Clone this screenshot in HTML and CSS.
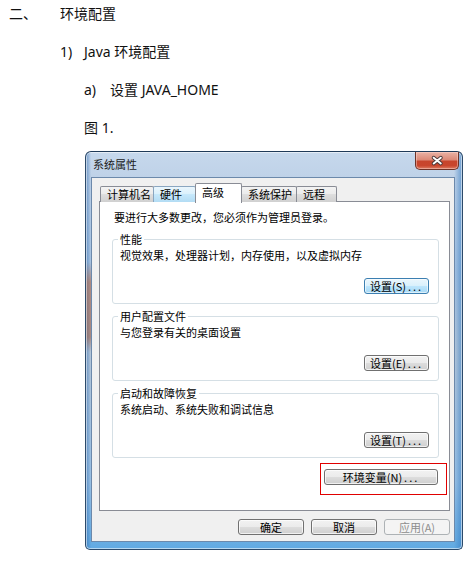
FILE: index.html
```html
<!DOCTYPE html>
<html lang="zh-CN">
<head>
<meta charset="utf-8">
<title>环境配置</title>
<link rel="stylesheet" href="styles.css">
</head>
<body>
<div class="doc">
  <p class="line l1"><span class="num n1">二、</span><span>环境配置</span></p>
  <p class="line l2"><span class="num n2">1)</span><span>Java 环境配置</span></p>
  <p class="line l3"><span class="num n3">a)</span><span>设置 JAVA_HOME</span></p>
  <p class="line l4">图 1.</p>

  <div class="window">
    <div class="titlebar">
      <span class="title">系统属性</span>
      <span class="close">
        <svg width="44" height="18" viewBox="0 0 44 18">
          <path d="M18.5 5.5 L26 11.5 M26 5.5 L18.5 11.5" stroke="#4a3a3a" stroke-width="4" stroke-linecap="round" fill="none"/>
          <path d="M18.5 5.5 L26 11.5 M26 5.5 L18.5 11.5" stroke="#ffffff" stroke-width="2" stroke-linecap="round" fill="none"/>
        </svg>
      </span>
    </div>
    <div class="client">
      <div class="tabs">
        <span class="tab t1">计算机名</span>
        <span class="tab t2 hover">硬件</span>
        <span class="tab t3 active">高级</span>
        <span class="tab t4">系统保护</span>
        <span class="tab t5">远程</span>
      </div>
      <div class="panel">
        <p class="intro">要进行大多数更改，您必须作为管理员登录。</p>
        <fieldset class="group">
          <legend>性能</legend>
          <p class="gtext">视觉效果，处理器计划，内存使用，以及虚拟内存</p>
          <div class="grow"><span class="btn small focus">设置(<u>S</u>)<span class="dots">...</span></span></div>
        </fieldset>
        <fieldset class="group">
          <legend>用户配置文件</legend>
          <p class="gtext">与您登录有关的桌面设置</p>
          <div class="grow"><span class="btn small">设置(<u>E</u>)<span class="dots">...</span></span></div>
        </fieldset>
        <fieldset class="group">
          <legend>启动和故障恢复</legend>
          <p class="gtext">系统启动、系统失败和调试信息</p>
          <div class="grow"><span class="btn small">设置(<u>T</u>)<span class="dots">...</span></span></div>
        </fieldset>
        <div class="envrow">
          <div class="mark"><span class="btn env">环境变量(<u>N</u>)<span class="dots">...</span></span></div>
        </div>
      </div>
      <div class="actions">
        <span class="btn act">确定</span>
        <span class="btn act">取消</span>
        <span class="btn act disabled">应用(<u>A</u>)</span>
      </div>
    </div>
  </div>
</div>
</body>
</html>
```

FILE: styles.css
```css
html, body {
  margin: 0;
  padding: 0;
  background: #ffffff;
}

.doc {
  width: 474px;
  padding-top: 4px;
  font-family: "Noto Sans", "Noto Sans CJK SC", sans-serif;
  font-size: 14px;
  color: #111;
}

.line {
  margin: 0 0 18px 0;
  line-height: 20px;
  height: 20px;
  display: flex;
  white-space: nowrap;
}

.l1 { padding-left: 9px; }
.l2 { padding-left: 60px; }
.l3 { padding-left: 84px; }
.l4 { padding-left: 84px; margin-bottom: 0; }

.num { display: inline-block; }
.n1 { width: 51px; }
.n2 { width: 24px; }
.n3 { width: 26px; }

/* ---------- window ---------- */
.window {
  margin: 13px 0 0 85px;
  width: 378px;
  height: 399px;
  box-sizing: border-box;
  border: 1px solid #2c4a6a;
  border-top-color: #1f3a58;
  border-radius: 6px 6px 5px 5px;
  padding: 0 7px 7px 5px;
  display: flex;
  flex-direction: column;
  background:
    linear-gradient(180deg, rgba(0,0,0,0) 0, rgba(0,0,0,0) 110px, rgba(180,95,55,0.55) 130px, rgba(160,80,45,0.5) 185px, rgba(0,0,0,0) 200px) left top / 5px 100% no-repeat,
    linear-gradient(90deg, rgba(40,100,170,0.55) 0, rgba(40,100,170,0) 5px, rgba(0,0,0,0) 368px, rgba(50,120,190,0.6) 376px),
    linear-gradient(180deg, #c6d8ec 0, #bfd2e8 25px, #a9c5e3 120px, #b9c9da 200px, #9cc3e6 330px, #5fa9e2 399px);
  box-shadow: inset 0 0 0 1px rgba(255,255,255,0.55);
  font-family: "Noto Sans CJK SC", "Noto Sans", sans-serif;
  font-size: 11px;
  color: #000;
}

.titlebar {
  height: 25px;
  flex: none;
  display: flex;
  justify-content: space-between;
  align-items: flex-start;
  padding-left: 2px;
  margin-right: -4px;
}

.title {
  line-height: 14px;
  margin-top: 5px;
  color: #1b1b1b;
  font-size: 11px;
}

.close {
  width: 44px;
  height: 18px;
  box-sizing: border-box;
  border: 1px solid #6d3328;
  border-top: none;
  border-radius: 0 0 5px 5px;
  background: linear-gradient(180deg, #e9b2a5 0, #dc8a78 45%, #c7452c 55%, #c9462d 80%, #dc7d63 100%);
  box-shadow: inset 0 0 0 1px rgba(255,220,210,0.45);
  display: flex;
}

.close svg { display: block; }

.client {
  flex: 1;
  box-sizing: border-box;
  border: 1px solid #6c89ab;
  background: #f0f0f0;
  padding: 5px 4px 6px 7px;
  display: flex;
  flex-direction: column;
}

/* ---------- tabs ---------- */
.tabs {
  height: 19px;
  flex: none;
  display: flex;
  align-items: flex-end;
  padding-left: 1px;
  margin-bottom: -1px;
  position: relative;
  z-index: 1;
}

.tab {
  box-sizing: border-box;
  height: 16px;
  border: 1px solid #898c95;
  border-bottom: none;
  border-radius: 2px 2px 0 0;
  margin-right: -1px;
  padding: 0 0 0 6px;
  line-height: 15px;
  background: linear-gradient(180deg, #f3f3f3 0, #ebebeb 50%, #dedede 50%, #d0d0d0 100%);
  white-space: nowrap;
}

.t1 { width: 54px; }
.t2 { width: 43px; }
.t3 { width: 47px; }
.t4 { width: 56px; }
.t5 { width: 41px; }

.tab.hover {
  background: linear-gradient(180deg, #eaf6fd 0, #d9f0fc 50%, #c6e8fb 50%, #b3dcf4 100%);
  border-color: #8aa6c0;
}

.tab.active {
  background: #ffffff;
  border-color: #898c95;
  position: relative;
  z-index: 2;
  padding-top: 1px;
  line-height: 14px;
  height: 20px;
  margin-bottom: -1px;
}

.panel {
  flex: none;
  height: 310px;
  box-sizing: border-box;
  border: 1px solid #898c95;
  background: #ffffff;
  padding: 8px 10px 0 12px;
  display: flex;
  flex-direction: column;
}

.intro {
  margin: 0 0 8px 0;
  padding-left: 2px;
  line-height: 14px;
}

.group {
  margin: 0 0 5px 0;
  border: 1px solid #d5dfe5;
  border-radius: 3px;
  padding: 2px 9px 9px 5px;
}

.group legend {
  padding: 0 2px;
  line-height: 14px;
}

.gtext {
  margin: 0;
  padding-left: 2px;
  line-height: 14px;
}

.grow {
  display: flex;
  justify-content: flex-end;
  margin-top: 16px;
}

/* ---------- buttons ---------- */
.btn {
  box-sizing: border-box;
  height: 16px;
  display: inline-flex;
  align-items: center;
  justify-content: center;
  border: 1px solid #707070;
  border-radius: 3px;
  background: linear-gradient(180deg, #f2f2f2 0, #ebebeb 50%, #dddddd 50%, #cfcfcf 100%);
  box-shadow: inset 0 0 0 1px rgba(255,255,255,0.7);
  line-height: 14px;
  white-space: nowrap;
  color: #000;
}

.btn u { text-decoration: none; }

.btn .dots {
  letter-spacing: 2px;
  margin-left: 2px;
}

.small { width: 65px; }

.btn.focus {
  border-color: #3c7fb1;
  background: linear-gradient(180deg, #eaf6fd 0, #d9f0fc 50%, #bee6fd 50%, #a7d9f5 100%);
  box-shadow: inset 0 0 0 1px rgba(255,255,255,0.6);
}

.envrow {
  display: flex;
  justify-content: flex-end;
  margin: 0 -8px 0 0;
}

.mark {
  border: 1px solid #e00000;
  padding: 5px 8px 9px 3px;
  display: flex;
}

.env { width: 114px; }

.actions {
  flex: none;
  margin-top: 8px;
  display: flex;
  justify-content: flex-end;
  gap: 7px;
}

.act { width: 66px; }

.btn.disabled {
  border-color: #adb2b5;
  background: #f4f4f4;
  box-shadow: none;
  color: #8d8d8d;
}
```
